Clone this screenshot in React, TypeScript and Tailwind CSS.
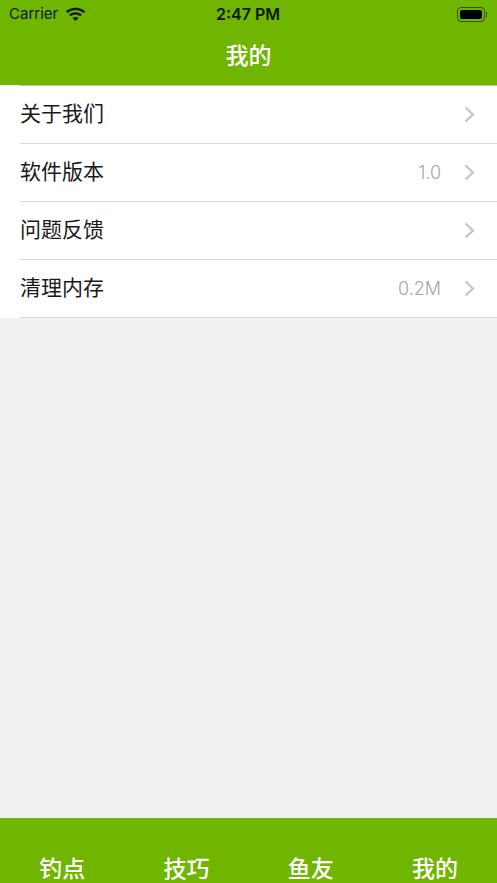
import React from 'react';

const cjk = { fontFamily: '"Noto Sans CJK SC", "Noto Sans", sans-serif' };

function WifiIcon() {
  return (
    <svg width="21" height="15" viewBox="0 0 20 15" fill="none" stroke="#0b1a00" strokeWidth="2.4">
      <path d="M1.2 5.2C6 0.8 14 0.8 18.8 5.2" />
      <path d="M4.4 8.4C7.4 5.7 12.6 5.7 15.6 8.4" />
      <path d="M10 14L7 11.1C8.6 9.7 11.4 9.7 13 11.1Z" fill="#0b1a00" stroke="none" />
    </svg>
  );
}

function BatteryIcon() {
  return (
    <div className="flex items-center">
      <div className="w-[28px] h-[15px] rounded-[4px] border border-[#2f5200] p-[2px]">
        <div className="w-full h-full rounded-[2px] bg-black" />
      </div>
      <div className="w-[1px] h-[5px] bg-[#2f5200] ml-[1px]" />
    </div>
  );
}

function Chevron() {
  return (
    <svg width="11" height="17" viewBox="0 0 11 17" fill="none" stroke="#c4c4c6" strokeWidth="2.2">
      <path d="M1.5 1.5L9 8.5L1.5 15.5" />
    </svg>
  );
}

const rows = [
  { label: '关于我们', value: '' },
  { label: '软件版本', value: '1.0' },
  { label: '问题反馈', value: '' },
  { label: '清理内存', value: '0.2M' },
];

const tabs = ['钓点', '技巧', '鱼友', '我的'];

export default function App() {
  return (
    <div className="w-[497px] h-[883px] overflow-hidden flex flex-col bg-[#f1f1f1]">
      <header className="h-[85px] shrink-0 bg-[#70b500]">
        <div className="h-[28px] flex items-center justify-between pl-[9px] pr-[10px] text-[#0b1a00] text-[15px]" style={{ fontFamily: '"Inter", sans-serif' }}>
          <div className="flex items-center gap-[7px] w-[120px]">
            <span>Carrier</span>
            <WifiIcon />
          </div>
          <span className="font-semibold text-[16px]">2:47 PM</span>
          <div className="w-[120px] flex justify-end">
            <BatteryIcon />
          </div>
        </div>
        <div className="h-[52px] flex items-center justify-center text-white text-[23px] font-medium" style={cjk}>
          我的
        </div>
      </header>

      <ul className="bg-white">
        <li className="h-[1px] pl-[20px]">
          <div className="h-full bg-[#b9c4ac]" />
        </li>
        {rows.map((row) => (
          <li key={row.label} className="h-[58px] pl-[20px]">
            <div className="h-full flex items-center border-b border-[#d9d9d9] pr-[22px]">
              <span className="flex-1 pb-[3px] text-[21px] text-[#1a1a1a]" style={cjk}>
                {row.label}
              </span>
              <span className="text-[18px] text-[#a5a5a5] mr-[23px]" style={{ fontFamily: '"Inter", sans-serif', fontWeight: 300 }}>
                {row.value}
              </span>
              <Chevron />
            </div>
          </li>
        ))}
      </ul>

      <div className="flex-1" />

      <nav className="h-[65px] shrink-0 bg-[#70b500] grid grid-cols-4 overflow-hidden">
        {tabs.map((tab) => (
          <div key={tab} className="flex justify-center pt-[32px] text-white text-[23px] leading-[34px] font-medium" style={cjk}>
            {tab}
          </div>
        ))}
      </nav>
    </div>
  );
}
